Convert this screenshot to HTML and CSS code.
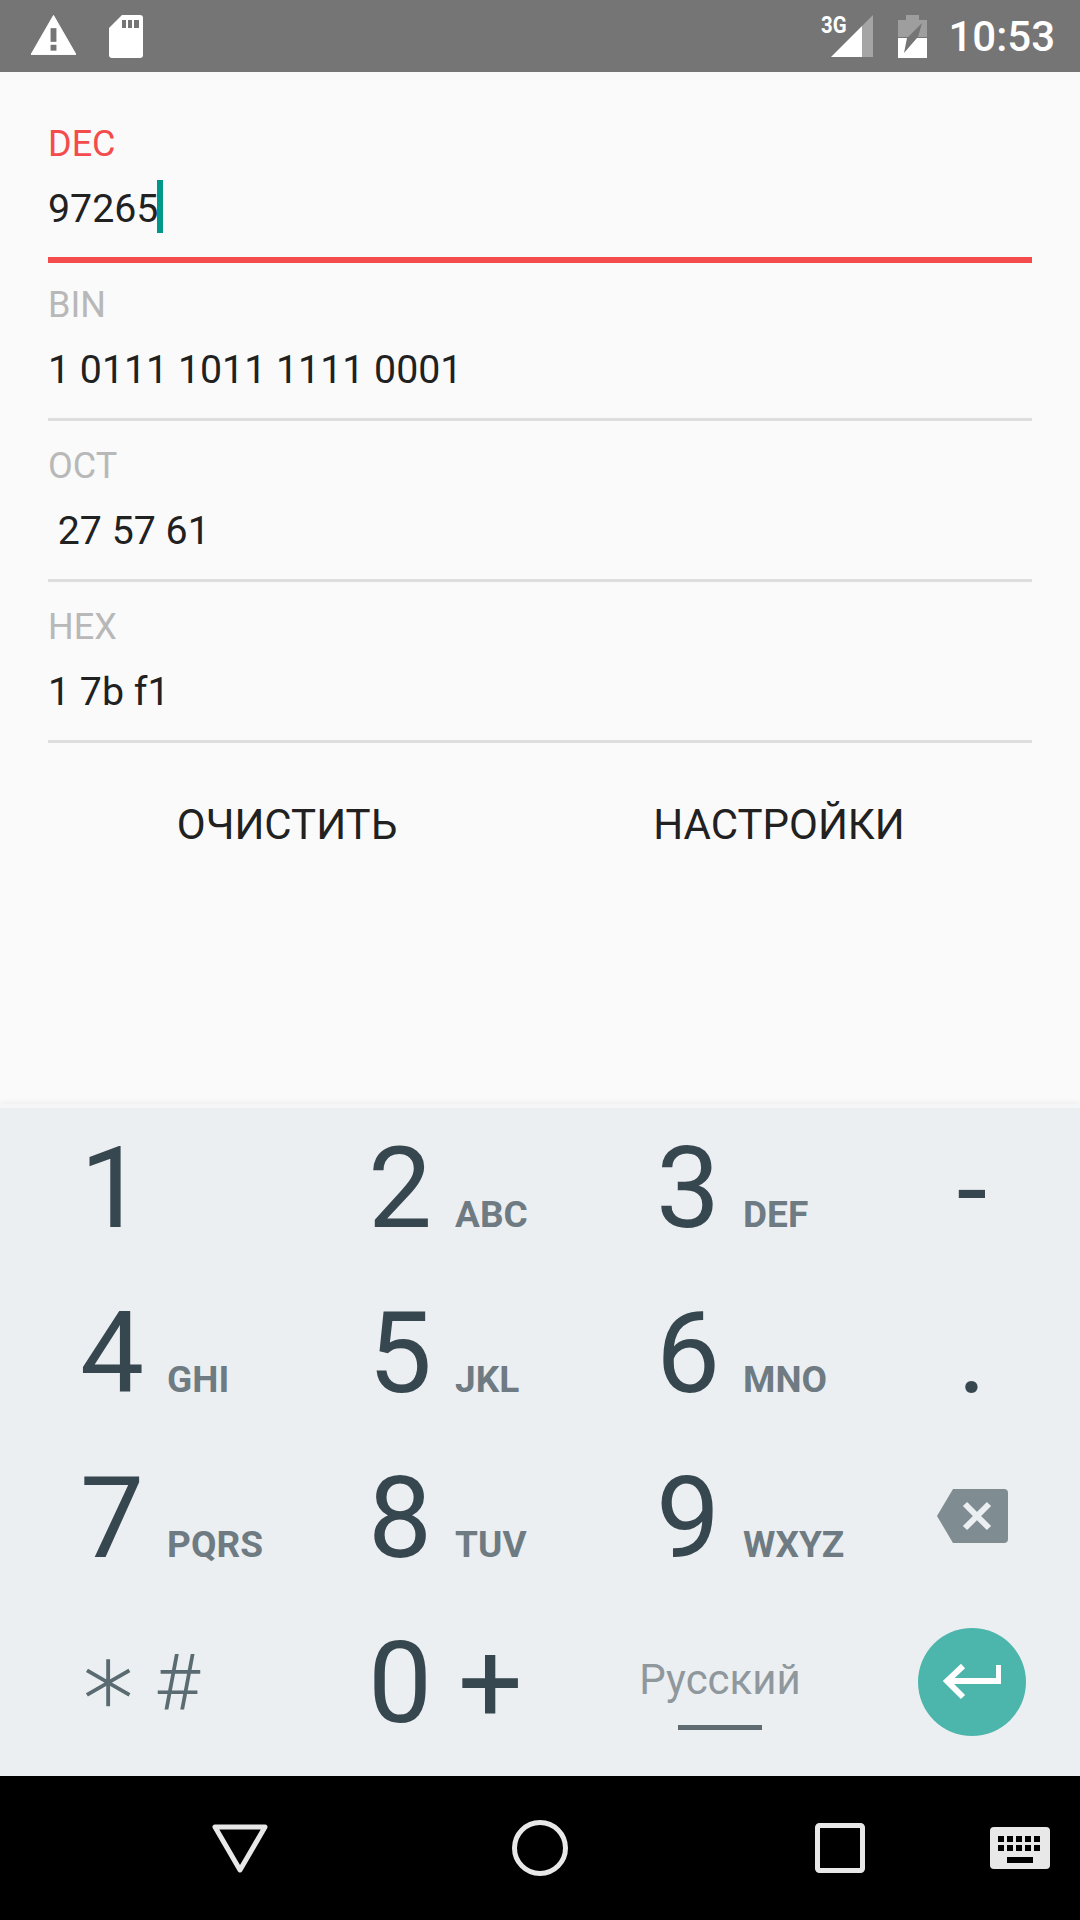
FILE: index.html
```html
<!DOCTYPE html>
<html lang="en">
<head>
    <meta charset="UTF-8">
    <meta name="viewport" content="width=device-width, initial-scale=1.0">
    <title>Converter</title>
    <link rel="stylesheet" href="styles.css">
</head>
<body>
    <div class="statusbar">
        <div class="status-left">
            <svg class="icon-warning" width="45" height="40" viewBox="0 0 46 40">
                <path d="M23 0 L46 40 H0 Z" fill="#fff" stroke="#fff" stroke-width="1" stroke-linejoin="round"/>
                <rect x="20" y="13" width="6" height="14" fill="#757575"/>
                <rect x="20" y="30" width="6" height="6" fill="#757575"/>
            </svg>
            <svg class="icon-sd" width="34" height="43" viewBox="0 0 34 43">
                <path d="M13 0 H31 Q34 0 34 3 V40 Q34 43 31 43 H3 Q0 43 0 40 V13 Z" fill="#fff"/>
                <rect x="13" y="5" width="4" height="8" fill="#757575"/>
                <rect x="19" y="5" width="4" height="8" fill="#757575"/>
                <rect x="25" y="5" width="5" height="8" fill="#757575"/>
            </svg>
        </div>
        <div class="status-right">
            <div class="signal">
                <span class="network">3G</span>
                <svg width="42" height="42" viewBox="0 0 42 42">
                    <path d="M0 42 L31 11 V42 Z" fill="#fff"/>
                    <path d="M31 11 L42 0 V42 H31 Z" fill="#fff" opacity="0.35"/>
                </svg>
            </div>
            <svg class="icon-battery" width="29" height="43" viewBox="0 0 29 43">
                <path d="M0 22 V5 H8 V0 H21 V5 H29 V22 H20 L24 8 L10 22 Z" fill="#fff" opacity="0.3"/>
                <path d="M0 23 H9 L6 38 L19 23 H29 V43 H0 Z" fill="#fff"/>
            </svg>
            <span class="clock">10:53</span>
        </div>
    </div>

    <div class="content">
        <div class="form">
            <div class="field active">
                <div class="field-label">DEC</div>
                <div class="field-value">97265<span class="caret"></span></div>
            </div>
            <div class="field">
                <div class="field-label">BIN</div>
                <div class="field-value">1 0111 1011 1111 0001</div>
            </div>
            <div class="field">
                <div class="field-label">OCT</div>
                <div class="field-value"> 27 57 61</div>
            </div>
            <div class="field">
                <div class="field-label">HEX</div>
                <div class="field-value">1 7b f1</div>
            </div>
        </div>
        <div class="actions">
            <span class="action">ОЧИСТИТЬ</span>
            <span class="action">НАСТРОЙКИ</span>
        </div>
    </div>

    <div class="keyboard">
        <div class="key"><span class="digit">1</span></div>
        <div class="key"><span class="digit">2</span><span class="letters">ABC</span></div>
        <div class="key"><span class="digit">3</span><span class="letters">DEF</span></div>
        <div class="key side"><span class="symbol">-</span></div>

        <div class="key"><span class="digit">4</span><span class="letters">GHI</span></div>
        <div class="key"><span class="digit">5</span><span class="letters">JKL</span></div>
        <div class="key"><span class="digit">6</span><span class="letters">MNO</span></div>
        <div class="key side"><span class="symbol">.</span></div>

        <div class="key"><span class="digit">7</span><span class="letters">PQRS</span></div>
        <div class="key"><span class="digit">8</span><span class="letters">TUV</span></div>
        <div class="key"><span class="digit">9</span><span class="letters">WXYZ</span></div>
        <div class="key side icon-key">
            <svg class="backspace" width="71" height="54" viewBox="0 0 71 54">
                <path d="M16 0 H67 Q71 0 71 4 V50 Q71 54 67 54 H16 L0 27 Z" fill="#7f8c92"/>
                <path d="M28 15 L52 39 M52 15 L28 39" stroke="#eceff1" stroke-width="6" fill="none"/>
            </svg>
        </div>

        <div class="key"><span class="star">∗</span><span class="hash">#</span></div>
        <div class="key"><span class="digit">0</span><span class="plus">+</span></div>
        <div class="key lang-key">
            <span class="lang">Русский</span>
            <span class="lang-line"></span>
        </div>
        <div class="key side icon-key">
            <div class="enter">
                <svg width="58" height="36" viewBox="0 0 58 36">
                    <path d="M56 1 V17 H5 M20 2 L4 17 L20 33" stroke="#fff" stroke-width="6" fill="none"/>
                </svg>
            </div>
        </div>
    </div>

    <div class="navbar">
        <svg class="nav-back" width="56" height="49" viewBox="0 0 56 49">
            <path d="M3 3 H53 L28 46 Z" fill="none" stroke="#e8e8e8" stroke-width="5" stroke-linejoin="round"/>
        </svg>
        <svg class="nav-home" width="56" height="56" viewBox="0 0 56 56">
            <circle cx="28" cy="28" r="25.5" fill="none" stroke="#e8e8e8" stroke-width="5"/>
        </svg>
        <svg class="nav-recent" width="50" height="50" viewBox="0 0 50 50">
            <rect x="2.5" y="2.5" width="45" height="45" rx="2" fill="none" stroke="#e8e8e8" stroke-width="5"/>
        </svg>
        <svg class="nav-keyboard" width="60" height="42" viewBox="0 0 60 42">
            <rect width="60" height="42" rx="4" fill="#e8e8e8"/>
            <path d="M8 9h6v6H8zM17 9h6v6h-6zM26 9h6v6h-6zM35 9h6v6h-6zM44 9h6v6h-6zM8 18h6v6H8zM17 18h6v6h-6zM26 18h6v6h-6zM35 18h6v6h-6zM44 18h6v6h-6zM17 30h26v6H17z" fill="#000"/>
        </svg>
    </div>
</body>
</html>
```

FILE: styles.css
```css
body {
    font-family: Roboto, "Noto Sans", sans-serif;
    margin: 0;
    width: 1080px;
    height: 1920px;
    overflow: hidden;
    display: flex;
    flex-direction: column;
    background-color: #fafafa;
}

/* status bar */
.statusbar {
    height: 72px;
    background-color: #757575;
    display: flex;
    justify-content: space-between;
    align-items: flex-start;
    color: #fff;
}

.status-left {
    display: flex;
    gap: 33px;
    padding: 15px 0 0 31px;
}

.status-right {
    display: flex;
    align-items: flex-start;
    padding: 15px 25px 0 0;
}

.signal {
    display: flex;
    align-items: flex-start;
    margin-right: 25px;
}

.network {
    font-size: 24px;
    font-weight: 700;
    line-height: 20px;
    width: 0;
    white-space: nowrap;
    transform: translateX(-10px) scaleX(0.85);
    transform-origin: left top;
}

.clock {
    font-size: 42px;
    font-weight: 500;
    line-height: 44px;
    margin-left: 21px;
}

/* form */
.content {
    flex: 1;
    padding-top: 27px;
}

.form {
    padding: 0 48px;
}

.field {
    height: 161px;
    box-sizing: border-box;
    border-bottom: 3px solid #dedede;
    padding-top: 23px;
}

.field.active {
    height: 164px;
    margin-bottom: -3px;
    border-bottom: 6px solid #f44c4c;
}

.field-label {
    font-size: 36px;
    line-height: 44px;
    color: #b8b8b8;
}

.active .field-label {
    color: #f44c4c;
}

.field-value {
    font-size: 39.3px;
    line-height: 60px;
    margin-top: 13px;
    color: #212121;
    white-space: pre;
    display: flex;
    align-items: center;
}

.caret {
    width: 6px;
    height: 53px;
    margin-left: -1px;
    margin-bottom: 5px;
    background-color: #009688;
}

.actions {
    display: grid;
    grid-template-columns: 492px 492px;
    padding: 58px 0 0 41px;
}

.action {
    font-size: 42px;
    line-height: 48px;
    color: #212121;
    text-align: center;
}

/* keyboard */
.keyboard {
    height: 668px;
    background-color: #eceff1;
    border-top: 4px solid #f5f6f7;
    box-shadow: 0 -2px 6px rgba(0, 0, 0, 0.05);
    display: grid;
    grid-template-columns: 288px 288px 288px 216px;
    grid-template-rows: repeat(4, 165px);
    color: #37474f;
}

.key {
    display: flex;
    align-items: baseline;
    padding-left: 80px;
    line-height: 160px;
}

.digit {
    font-size: 114px;
}

.letters {
    font-size: 37px;
    font-weight: 700;
    color: #6f7b82;
    margin-left: 23px;
}

.side {
    padding-left: 0;
    justify-content: center;
}

.symbol {
    font-size: 110px;
    transform: translateY(2px);
}

.icon-key {
    align-items: center;
}

.backspace {
    margin-bottom: 10px;
}

.star {
    font-family: "DejaVu Sans", sans-serif;
    font-size: 100px;
    font-weight: 200;
    color: #5b6b72;
    margin-left: -3px;
    -webkit-text-stroke: 1.5px #5b6b72;
    transform: translateY(-3px);
}

.hash {
    font-size: 78px;
    font-weight: 300;
    color: #5b6b72;
    margin-left: 15px;
    transform: translateY(-7px);
}

.plus {
    font-size: 114px;
    margin-left: 26px;
}

.lang-key {
    padding-left: 0;
    padding-top: 14px;
    height: 150px;
    flex-direction: column;
    align-items: center;
    justify-content: center;
    line-height: normal;
}

.lang {
    font-size: 42px;
    color: #8f989d;
}

.lang-line {
    width: 84px;
    height: 5px;
    margin-top: 21px;
    background-color: #5f6b71;
}

.enter {
    width: 108px;
    height: 108px;
    margin-bottom: 7px;
    border-radius: 50%;
    background-color: #4db6ac;
    display: flex;
    align-items: center;
    justify-content: center;
}

/* nav bar */
.navbar {
    height: 144px;
    background-color: #000;
    display: flex;
    align-items: center;
    flex-shrink: 0;
}

.nav-back {
    margin-left: 212px;
}

.nav-home {
    margin-left: 244px;
}

.nav-recent {
    margin-left: 247px;
}

.nav-keyboard {
    margin-left: 125px;
}
```
